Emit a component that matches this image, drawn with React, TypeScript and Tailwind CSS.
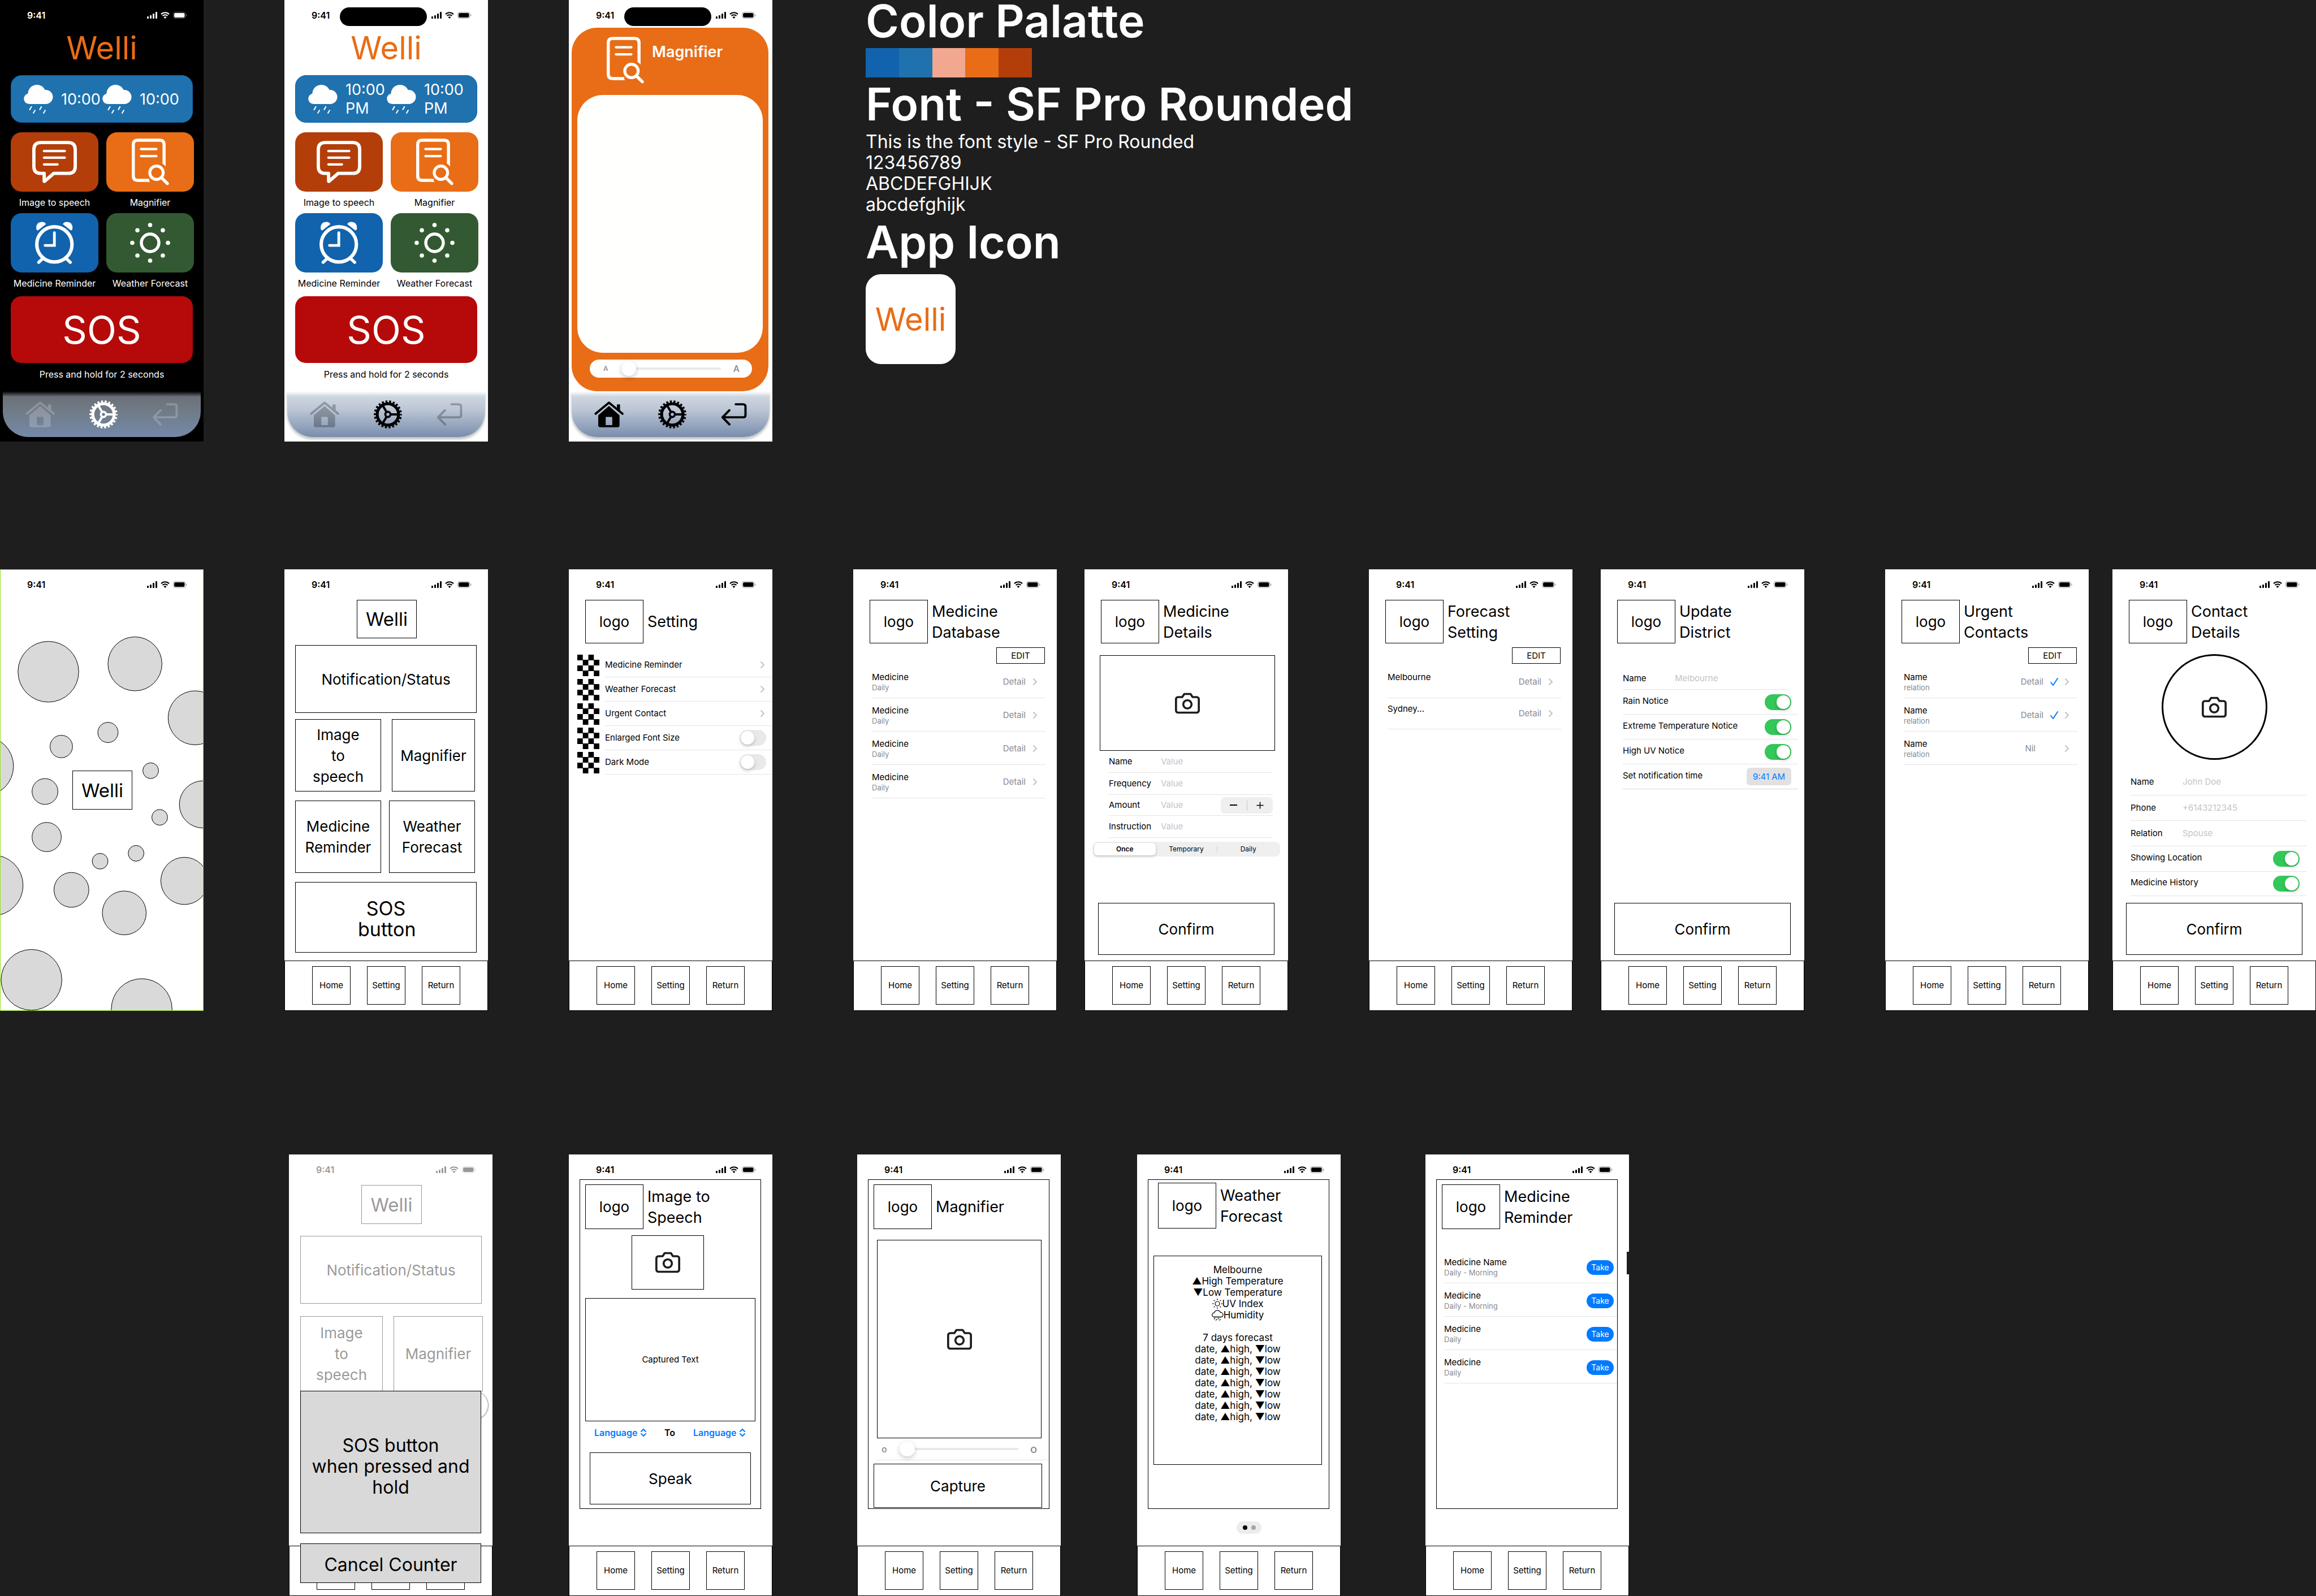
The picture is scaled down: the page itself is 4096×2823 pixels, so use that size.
import React, { ReactNode } from "react";

/* ---------- icons ---------- */

function SignalIcon() {
  return (
    <svg className="h-[12px] w-[18px]" viewBox="0 0 18 12" fill="currentColor" aria-hidden="true">
      <rect x="0" y="8" width="3" height="4" rx="1" />
      <rect x="5" y="6" width="3" height="6" rx="1" />
      <rect x="10" y="3" width="3" height="9" rx="1" />
      <rect x="15" y="0" width="3" height="12" rx="1" />
    </svg>
  );
}

function WifiIcon() {
  return (
    <svg className="h-[12px] w-[16px]" viewBox="0 0 16 12" fill="none" stroke="currentColor" strokeWidth="2" aria-hidden="true">
      <path d="M1 4.2a10 10 0 0 1 14 0" />
      <path d="M3.6 7a6.2 6.2 0 0 1 8.8 0" />
      <path d="M8 12 5.6 9.5a3.4 3.4 0 0 1 4.8 0z" fill="currentColor" stroke="none" />
    </svg>
  );
}

function BatteryIcon() {
  return (
    <svg className="h-[12px] w-[25px]" viewBox="0 0 25 12" aria-hidden="true">
      <rect x="0.5" y="0.5" width="21.5" height="11" rx="3.5" fill="none" stroke="currentColor" opacity="0.35" />
      <path d="M23.3 4v4c.8-.3 1.3-1.100 1.300-2s-.5-1.700-1.300-2z" fill="currentColor" opacity="0.4" />
      <rect x="2" y="2" width="18.500" height="8" rx="2.300" fill="currentColor" />
    </svg>
  );
}

function RainIcon() {
  return (
    <svg className="h-[51px] w-[52px] shrink-0" viewBox="93 78 170 168" fill="white" aria-hidden="true">
      <circle cx="124" cy="159" r="31" />
      <circle cx="169" cy="130" r="52" />
      <circle cx="221" cy="149" r="41" />
      <rect x="124" y="150" width="98" height="40" />
      <path d="M137 206l-10 17M158 227l-9 15M195 206l-9 16M217 227l-9 16" stroke="white" strokeWidth="7" strokeLinecap="round" />
    </svg>
  );
}

function SpeechIcon() {
  return (
    <svg className="h-[75px] w-[79px]" viewBox="147 402 258 244" fill="none" stroke="white" strokeLinecap="round" strokeLinejoin="round" aria-hidden="true">
      <path strokeWidth="19" d="M197 411.500H355Q395.500 411.500 395.500 452V550Q395.500 590 355 590H271L218 636Q216 636 216 633V590H197Q156.500 590 156.500 550V452Q156.500 411.500 197 411.500Z" />
      <path strokeWidth="14" d="M215 461H335M215 499H335M215 538H293" />
    </svg>
  );
}

function DocSearchIcon() {
  return (
    <svg className="h-[83px] w-[66px]" viewBox="723 388 217 271" fill="none" stroke="white" aria-hidden="true">
      <path strokeWidth="18" d="M825 630H758Q732 630 732 604V423Q732 397 758 397H885Q911 397 911 423V532" />
      <path d="M902 530l18 0v20q-8-11-18-17zM814 621q5 11 17 18h-20z" fill="white" stroke="none" />
      <path strokeWidth="14" strokeLinecap="round" d="M777 448H866M777 489H866" />
      <circle cx="867" cy="586" r="39" strokeWidth="17" />
      <path strokeWidth="18" strokeLinecap="round" d="M899 618l31 31" />
    </svg>
  );
}

function AlarmIcon() {
  return (
    <svg className="h-[75px] w-[69px]" viewBox="156 854 226 244" fill="none" stroke="white" strokeLinecap="round" aria-hidden="true">
      <circle cx="268" cy="985" r="102" strokeWidth="20" />
      <path strokeWidth="16" strokeLinejoin="miter" d="M268 918V991H214" />
      <path strokeWidth="18" d="M200 1068l-23 21M337 1068l23 21" />
      <path fill="white" stroke="none" d="M163 890Q163 855 195 855Q214 855 219 868L173 904Q163 904 163 890Z" />
      <path fill="white" stroke="none" d="M373 890Q373 855 341 855Q322 855 317 868L363 904Q373 904 373 890Z" />
    </svg>
  );
}

function SunIcon() {
  return (
    <svg className="h-[71px] w-[71px]" viewBox="704 881 234 234" fill="white" aria-hidden="true">
      <circle cx="821" cy="998" r="51" fill="none" stroke="white" strokeWidth="18" />
      <circle cx="821" cy="894" r="12.500" />
      <circle cx="821" cy="1102" r="12.500" />
      <circle cx="717" cy="998" r="12.500" />
      <circle cx="925" cy="998" r="12.500" />
      <circle cx="747" cy="925" r="12.500" />
      <circle cx="895" cy="925" r="12.500" />
      <circle cx="747" cy="1072" r="12.500" />
      <circle cx="895" cy="1072" r="12.500" />
    </svg>
  );
}

function HouseIcon() {
  return (
    <svg className="h-[46px] w-[52px]" viewBox="145 88 170 150" fill="currentColor" aria-hidden="true">
      <path fillRule="evenodd" d="M168 168L230 114L291 168V227Q291 237 281 237H178Q168 237 168 227ZM211 181V225H249V181Q249 178 246 178H214Q211 178 211 181Z" />
      <path d="M276 139V108Q276 105 279 105H291Q294 105 294 108V152Z" />
      <path fill="none" stroke="currentColor" strokeWidth="13" strokeLinecap="round" strokeLinejoin="round" d="M153 159L230 95L308 159" />
    </svg>
  );
}

function GearIcon() {
  return (
    <svg className="h-[50px] w-[50px]" viewBox="-82 -82 164 164" fill="none" stroke="currentColor" aria-hidden="true">
      <circle r="62" strokeWidth="17" />
      <circle r="74" strokeWidth="15" strokeDasharray="11.134 10" strokeDashoffset="5.500" />
      <circle r="15" strokeWidth="12" />
      <path strokeWidth="13" d="M18 0H58M-9 -16L-29 -50M-9 16L-29 50" />
    </svg>
  );
}

function ReturnIcon() {
  return (
    <svg className="h-[40px] w-[46px]" viewBox="884 100 149 132" fill="none" stroke="currentColor" strokeWidth="13" strokeLinecap="round" strokeLinejoin="round" aria-hidden="true">
      <path d="M969 107H1012Q1026 107 1026 121V169Q1026 183 1012 183H892M932 142L892 183L932 224" />
    </svg>
  );
}

function CameraIcon() {
  return (
    <svg className="h-[44px] w-[44px]" viewBox="0 0 24 24" fill="none" stroke="#1d1d1f" strokeWidth="2" strokeLinejoin="round" aria-hidden="true">
      <path d="M23 19a2 2 0 0 1-2 2H3a2 2 0 0 1-2-2V8a2 2 0 0 1 2-2h4l2-3h6l2 3h4a2 2 0 0 1 2 2z" />
      <circle cx="12" cy="13" r="4" />
    </svg>
  );
}

function Chevron() {
  return (
    <svg className="h-[12px] w-[7px] shrink-0" viewBox="0 0 7 12" fill="none" stroke="#c4c4c7" strokeWidth="2" strokeLinecap="round" strokeLinejoin="round" aria-hidden="true">
      <path d="M1 1l5 5-5 5" />
    </svg>
  );
}

function Check() {
  return (
    <svg className="h-[14px] w-[14px] shrink-0" viewBox="0 0 14 14" fill="none" stroke="#007aff" strokeWidth="2" strokeLinecap="round" strokeLinejoin="round" aria-hidden="true">
      <path d="M1 8l4 5L13 1" />
    </svg>
  );
}

function SmallSun() {
  return (
    <svg className="h-[18px] w-[18px]" viewBox="0 0 18 18" fill="black" aria-hidden="true">
      <circle cx="9" cy="9" r="4" fill="none" stroke="black" strokeWidth="1.200" />
      <circle cx="9" cy="1.200" r="1" />
      <circle cx="9" cy="16.800" r="1" />
      <circle cx="1.200" cy="9" r="1" />
      <circle cx="16.800" cy="9" r="1" />
      <circle cx="3.500" cy="3.500" r="1" />
      <circle cx="14.500" cy="3.500" r="1" />
      <circle cx="3.500" cy="14.500" r="1" />
      <circle cx="14.500" cy="14.500" r="1" />
    </svg>
  );
}

function SmallRain() {
  return (
    <svg className="h-[20px] w-[21px]" viewBox="0 0 21 20" fill="none" stroke="black" strokeWidth="1.300" strokeLinecap="round" aria-hidden="true">
      <path d="M4.500 13.500a3.700 3.700 0 0 1-.2-7.400 6 6 0 0 1 11.200-.6 4 4 0 0 1 .8 8z" />
      <path d="M5.500 15.500l-1 1.800M8.500 17.500l-1 1.800M12 15.500l-1 1.800M15 17.500l-1 1.800" />
    </svg>
  );
}

/* ---------- phone shell ---------- */

function StatusBar({ faded = false }: { faded?: boolean }) {
  return (
    <div className={`flex h-[44px] items-center pt-[10px] pr-[29px] pl-[48px] ${faded ? "opacity-40" : ""}`}>
      <span className="text-[16px] leading-[20px] font-semibold">9:41</span>
      <div className="ml-auto flex items-center gap-[6px]">
        <SignalIcon />
        <WifiIcon />
        <BatteryIcon />
      </div>
    </div>
  );
}

type PhoneProps = {
  place: string;
  dark?: boolean;
  faded?: boolean;
  island?: boolean;
  footer?: ReactNode;
  children?: ReactNode;
};

function Phone({ place, dark, faded, island, footer, children }: PhoneProps) {
  return (
    <section className={`relative flex min-h-[781px] min-w-0 flex-col ${dark ? "bg-black text-white" : "bg-white text-black"} ${place}`}>
      <StatusBar faded={faded} />
      {island && <div className="absolute top-[13px] left-[98px] h-[33px] w-[154px] rounded-full bg-black" />}
      <div className="flex flex-1 flex-col">{children}</div>
      {footer}
    </section>
  );
}

function WireNav({ bare }: { bare?: boolean }) {
  return (
    <nav className="flex h-[89px] gap-[29px] border border-black pt-[9px] pl-[48px]">
      {["Home", "Setting", "Return"].map((name) => (
        <button key={name} aria-label={name} className="h-[68px] w-[68px] border border-black text-[15px] leading-[18px]">
          {bare ? null : name}
        </button>
      ))}
    </nav>
  );
}

function AppNav({ dark, homeActive }: { dark?: boolean; homeActive?: boolean }) {
  const dim = dark ? "opacity-20" : "opacity-25";
  return (
    <nav
      className={`mx-[5px] mb-[8px] flex h-[81px] items-center justify-between rounded-b-[45px] px-[40px] ${
        dark
          ? "bg-[linear-gradient(#000,#6b7079_12%,#6f7983_35%,#7489a8)]"
          : "bg-[linear-gradient(#fff,#cdd5df_12%,#bcc6d5_40%,#788dac)] shadow-[0_4px_4px_rgba(0,0,0,0.25)]"
      }`}
    >
      <button aria-label="Home" className={homeActive ? "" : dim}>
        <HouseIcon />
      </button>
      <button aria-label="Settings">
        <GearIcon />
      </button>
      <button aria-label="Return" className={homeActive ? "" : dim}>
        <ReturnIcon />
      </button>
    </nav>
  );
}

/* ---------- shared parts ---------- */

function Header({ title, place = "mt-[10px] ml-[29px]", logo = "h-[77px]" }: { title: string; place?: string; logo?: string }) {
  return (
    <header className={`flex items-center gap-[7px] ${place}`}>
      <div className={`flex w-[103px] shrink-0 items-center justify-center border border-black text-[26px] leading-[37px] ${logo}`}>logo</div>
      <h2 className="text-[27px] leading-[37px] whitespace-pre-line">{title}</h2>
    </header>
  );
}

function Toggle({ id, on }: { id: string; on?: boolean }) {
  return (
    <input
      id={id}
      type="checkbox"
      defaultChecked={on}
      className="relative h-[28px] w-[47px] shrink-0 appearance-none rounded-full bg-[#e9e9ea] before:absolute before:top-[2px] before:left-[2px] before:h-[24px] before:w-[24px] before:rounded-full before:bg-white before:shadow-[0_3px_6px_rgba(0,0,0,0.2)] checked:bg-[#34c759] checked:before:left-[21px]"
    />
  );
}

function EditButton() {
  return <button className="mt-[7px] mr-[21px] h-[29px] w-[86px] self-end border border-black text-[15px] leading-[20px]">EDIT</button>;
}

type DetailRowProps = { title: string; sub?: string; detail?: string; checked?: boolean; height?: string };

function DetailRow({ title, sub, detail = "Detail", checked, height = "h-[59px] pt-[2px]" }: DetailRowProps) {
  return (
    <li className={`flex items-center border-b border-[#e4e4e6] pr-[15px] ${height}`}>
      <div className="flex h-[36px] flex-col">
        <span className="text-[15px] leading-[19px]">{title}</span>
        {sub && <span className="text-[13px] leading-[18px] text-[#8a8a8e]">{sub}</span>}
      </div>
      <a href="#detail" className="ml-auto flex items-center text-[15px] leading-[20px] text-[#8a8a8e]">
        <span className={detail === "Nil" ? "mr-[52px]" : checked ? "mr-[12px]" : "mr-[13px]"}>{detail}</span>
        {checked && (
          <span className="mr-[12px]">
            <Check />
          </span>
        )}
        <Chevron />
      </a>
    </li>
  );
}

type FieldProps = { id: string; label: string; hint: string; height: string; labelWidth: string; children?: ReactNode };

function Field({ id, label, hint, height, labelWidth, children }: FieldProps) {
  return (
    <div className={`flex items-center border-b border-[#e4e4e6] ${height}`}>
      <label htmlFor={id} className={`shrink-0 text-[15px] leading-[20px] ${labelWidth}`}>
        {label}
      </label>
      <input id={id} placeholder={hint} className="min-w-0 flex-1 bg-transparent text-[15px] leading-[20px] outline-none placeholder:text-[#c4c4c7]" />
      {children}
    </div>
  );
}

function ToggleField({ id, label, height, pad }: { id: string; label: string; height: string; pad: string }) {
  return (
    <div className={`flex items-center justify-between border-b border-[#e4e4e6] ${height} ${pad}`}>
      <label htmlFor={id} className="pb-[4px] text-[15px] leading-[20px]">
        {label}
      </label>
      <Toggle id={id} on />
    </div>
  );
}

function ConfirmButton() {
  return <button className="mx-[24px] mt-auto mb-[10px] h-[92px] border border-black text-[26px] leading-[37px]">Confirm</button>;
}

const frame = "mr-[20px] ml-[19px] flex h-[583px] flex-col border border-black";

/* ---------- screens: finished design ---------- */

function Tile({ name, color, children }: { name: string; color: string; children: ReactNode }) {
  return (
    <button className="flex flex-col items-stretch">
      <span className={`flex h-[105px] items-center justify-center rounded-[19px] ${color}`}>{children}</span>
      <span className="text-[16px] leading-[38px] whitespace-nowrap">{name}</span>
    </button>
  );
}

function HomeScreen({ place, dark, time }: { place: string; dark?: boolean; time: string }) {
  return (
    <Phone place={place} dark={dark} island={!dark} footer={<AppNav dark={dark} />}>
      <h1 className="mt-[5px] text-center text-[56px] leading-[72px] text-[#e86d16]">Welli</h1>
      <div className="mx-[19px] mt-[12px] flex h-[84px] items-center rounded-[19px] border border-[#1063ac] bg-[#1f72ae] pl-[22px] text-[27px] leading-[33px] text-white">
        {[0, 1].map((n) => (
          <div key={n} className="flex w-[139px] shrink-0 items-center gap-[14px]">
            <RainIcon />
            <span>{time}</span>
          </div>
        ))}
      </div>
      <div className="mt-[17px] mr-[17px] ml-[19px] grid grid-cols-2 gap-x-[14px]">
        <Tile name="Image to speech" color="bg-[#b43e09]">
          <SpeechIcon />
        </Tile>
        <Tile name="Magnifier" color="bg-[#e86d16]">
          <DocSearchIcon />
        </Tile>
        <Tile name="Medicine Reminder" color="bg-[#1063ac]">
          <AlarmIcon />
        </Tile>
        <Tile name="Weather Forecast" color="bg-[#335932]">
          <SunIcon />
        </Tile>
      </div>
      <button className="mx-[19px] mt-[4px] h-[118px] rounded-[19px] bg-[#b50a09] text-[68px] leading-[80px] text-white">SOS</button>
      <p className="text-center text-[16px] leading-[40px]">Press and hold for 2 seconds</p>
    </Phone>
  );
}

function MagnifierScreen({ place }: { place: string }) {
  return (
    <Phone place={place} island footer={<AppNav homeActive />}>
      <div className="mt-[5px] mr-[7px] ml-[5px] flex h-[643px] flex-col rounded-[45px] bg-[#e86d16]">
        <div className="flex h-[119px] gap-[14px] pt-[16px] pl-[62px] text-white">
          <DocSearchIcon />
          <h2 className="pt-[8px] text-[27px] leading-[38px] font-semibold">Magnifier</h2>
        </div>
        <div className="mx-[10px] h-[456px] rounded-[45px] bg-[#fffffd]" />
        <div className="mt-[12px] mr-[29px] ml-[32px] flex h-[32px] items-center rounded-[16px] bg-white pr-[22px] pl-[24px] font-medium text-[#8a8a8e]">
          <span className="text-[12px] leading-[16px]">A</span>
          <input
            type="range"
            aria-label="Zoom"
            defaultValue={0}
            className="mr-[22px] ml-[23px] h-[4px] min-w-0 flex-1 appearance-none rounded-full bg-[#e9e9ea] [&::-webkit-slider-thumb]:h-[26px] [&::-webkit-slider-thumb]:w-[26px] [&::-webkit-slider-thumb]:appearance-none [&::-webkit-slider-thumb]:rounded-full [&::-webkit-slider-thumb]:bg-white [&::-webkit-slider-thumb]:shadow-[0_3px_8px_rgba(0,0,0,0.22)]"
          />
          <span className="text-[16px] leading-[20px]">A</span>
        </div>
      </div>
    </Phone>
  );
}

function StyleGuide({ place }: { place: string }) {
  const title = "text-[80px] leading-[74px] font-semibold";
  return (
    <section className={`text-white ${place}`}>
      <h1 className={title}>Color Palatte</h1>
      <div className="mt-[11px] flex h-[52px] w-[294px]">
        <div className="flex-1 bg-[#1063ac]" />
        <div className="flex-1 bg-[#1f72ae]" />
        <div className="flex-1 bg-[#f2a890]" />
        <div className="flex-1 bg-[#e86d16]" />
        <div className="flex-1 bg-[#b43e09]" />
      </div>
      <h1 className={`mt-[10px] ${title}`}>Font - SF Pro Rounded</h1>
      <p className="mt-[11px] text-[32px] leading-[37px]">
        This is the font style - SF Pro Rounded
        <br />
        123456789
        <br />
        ABCDEFGHIJK
        <br />
        abcdefghijk
      </p>
      <h1 className={`mt-[11px] ${title}`}>App Icon</h1>
      <div className="mt-[20px] flex h-[159px] w-[159px] items-center justify-center rounded-[27px] bg-white text-[56px] leading-[72px] text-[#e86d16]">Welli</div>
    </section>
  );
}

/* ---------- screens: wireframes ---------- */

const bubbles = [
  [85, 180, 54],
  [239, 166, 48],
  [346, 262, 48],
  [191, 288, 18],
  [108, 313, 20],
  [-30, 348, 53],
  [267, 356, 14],
  [79, 393, 23],
  [360, 416, 42],
  [283, 439, 14],
  [82, 474, 26],
  [241, 503, 14],
  [177, 517, 14],
  [-14, 560, 54],
  [126, 568, 31],
  [327, 552, 42],
  [220, 609, 39],
  [55, 728, 54],
  [251, 780, 54],
];

function Splash({ place }: { place: string }) {
  return (
    <Phone place={`${place} ring-1 ring-inset ring-[#94e01b]`}>
      <svg className="absolute inset-0 h-full w-full p-px" viewBox="0 0 360 781" fill="#d9d9d9" stroke="black" aria-hidden="true">
        {bubbles.map(([x, y, r]) => (
          <circle key={`${x}-${y}`} cx={x} cy={y} r={r} />
        ))}
      </svg>
      <div className="relative mt-[312px] ml-[128px] flex h-[69px] w-[106px] items-center justify-center border border-black bg-white text-[33px] leading-[40px]">Welli</div>
    </Phone>
  );
}

const wireButton = "border border-black text-[26px] leading-[37px]";

function WireHome({ place }: { place: string }) {
  return (
    <Phone place={place} footer={<WireNav />}>
      <div className="mt-[10px] ml-[128px] flex h-[68px] w-[106px] items-center justify-center border border-black text-[33px] leading-[40px]">Welli</div>
      <div className={`mt-[12px] mr-[20px] ml-[19px] flex h-[120px] items-center justify-center ${wireButton}`}>Notification/Status</div>
      <div className="mt-[11px] mr-[23px] ml-[19px] grid grid-cols-[152fr_147fr] gap-[19px]">
        <button className={`h-[128px] px-[24px] ${wireButton}`}>Image to speech</button>
        <button className={`h-[128px] ${wireButton}`}>Magnifier</button>
      </div>
      <div className="mt-[16px] mr-[23px] ml-[19px] grid grid-cols-2 gap-[14px]">
        <button className={`h-[128px] ${wireButton}`}>Medicine Reminder</button>
        <button className={`h-[128px] ${wireButton}`}>Weather Forecast</button>
      </div>
      <button className="mt-[16px] mr-[20px] ml-[19px] h-[125px] border border-black px-[110px] pt-[4px] text-[34px] leading-[37px]">SOS button</button>
    </Phone>
  );
}

const checkers = "mb-[2px] h-[38px] w-[39px] bg-[repeating-conic-gradient(#fff_0_25%,#000_0_50%)] bg-size-[50%_50%]";

function WireSettings({ place }: { place: string }) {
  return (
    <Phone place={place} footer={<WireNav />}>
      <Header title="Setting" />
      <ul className="mt-[17px]">
        {["Medicine Reminder", "Weather Forecast", "Urgent Contact"].map((name) => (
          <li key={name} className="flex h-[43px] items-end pl-[15px]">
            <span className={checkers} />
            <a href="#open" className="ml-[10px] flex h-[43px] flex-1 items-center justify-between border-b border-[#e4e4e6] pr-[14px] text-[15px] leading-[20px]">
              {name}
              <Chevron />
            </a>
          </li>
        ))}
        {["Enlarged Font Size", "Dark Mode"].map((name) => (
          <li key={name} className="flex h-[43px] items-end pl-[15px]">
            <span className={checkers} />
            <label className="ml-[10px] flex h-[43px] flex-1 items-center justify-between border-b border-[#e4e4e6] pr-[11px] text-[15px] leading-[20px]">
              {name}
              <Toggle id={name} />
            </label>
          </li>
        ))}
      </ul>
    </Phone>
  );
}

function MedicineDatabase({ place }: { place: string }) {
  return (
    <Phone place={place} footer={<WireNav />}>
      <Header title={"Medicine\nDatabase"} />
      <EditButton />
      <ul className="mt-[2px] mr-[20px] ml-[33px]">
        {[0, 1, 2, 3].map((n) => (
          <DetailRow key={n} title="Medicine" sub="Daily" />
        ))}
      </ul>
    </Phone>
  );
}

function MedicineDetails({ place }: { place: string }) {
  return (
    <Phone place={place} footer={<WireNav />}>
      <Header title={"Medicine\nDetails"} />
      <button aria-label="Add photo" className="mt-[21px] mr-[23px] ml-[27px] flex h-[169px] items-center justify-center border border-black">
        <CameraIcon />
      </button>
      <div className="mr-[27px] ml-[43px]">
        <Field id="med-name" label="Name" hint="Value" height="h-[39px]" labelWidth="w-[92px]" />
        <Field id="med-frequency" label="Frequency" hint="Value" height="h-[39px]" labelWidth="w-[92px]" />
        <Field id="med-amount" label="Amount" hint="Value" height="h-[37px]" labelWidth="w-[92px]">
          <div className="flex h-[29px] w-[92px] items-center rounded-[7px] bg-[#efeff0]">
            <button aria-label="Less" className="flex h-full flex-1 items-center justify-center">
              <span className="h-[2px] w-[13px] bg-black" />
            </button>
            <span className="h-[17px] w-px bg-[#c4c4c7]" />
            <button aria-label="More" className="flex h-full flex-1 items-center justify-center">
              <svg className="h-[13px] w-[13px]" viewBox="0 0 13 13" stroke="black" strokeWidth="1.500" strokeLinecap="round" aria-hidden="true">
                <path d="M6.500 1v11M1 6.500h11" />
              </svg>
            </button>
          </div>
        </Field>
        <Field id="med-instruction" label="Instruction" hint="Value" height="h-[39px]" labelWidth="w-[92px]" />
      </div>
      <div className="mt-[7px] mr-[14px] ml-[15px] flex h-[26px] items-center rounded-[8px] bg-[#efeff0] p-[2px] text-[12px] leading-[16px]">
        <button className="h-full flex-1 rounded-[6px] bg-white font-semibold shadow-[0_2px_5px_rgba(0,0,0,0.2)]">Once</button>
        <button className="h-full flex-1">Temporary</button>
        <span className="h-[11px] w-px bg-[#d0d0d4]" />
        <button className="h-full flex-1">Daily</button>
      </div>
      <ConfirmButton />
    </Phone>
  );
}

function ForecastSetting({ place }: { place: string }) {
  return (
    <Phone place={place} footer={<WireNav />}>
      <Header title={"Forecast\nSetting"} />
      <EditButton />
      <ul className="mt-[2px] mr-[20px] ml-[33px]">
        <DetailRow title="Melbourne" />
        <DetailRow title="Sydney..." height="h-[55px]" />
      </ul>
    </Phone>
  );
}

function UpdateDistrict({ place }: { place: string }) {
  return (
    <Phone place={place} footer={<WireNav />}>
      <Header title={"Update\nDistrict"} />
      <div className="mt-[43px] mr-[29px] ml-[39px]">
        <Field id="district" label="Name" hint="Melbourne" height="h-[39px]" labelWidth="w-[92px]" />
      </div>
      <div className="mr-[11px] ml-[39px]">
        <ToggleField id="rain" label="Rain Notice" height="h-[44px]" pad="pr-[12px]" />
        <ToggleField id="extreme" label="Extreme Temperature Notice" height="h-[44px]" pad="pr-[12px]" />
        <ToggleField id="uv" label="High UV Notice" height="h-[44px]" pad="pr-[12px]" />
        <div className="flex h-[44px] items-center justify-between border-b border-[#d8d8da] pr-[12px]">
          <span id="notify" className="pb-[3px] text-[15px] leading-[20px]">
            Set notification time
          </span>
          <button aria-labelledby="notify" className="h-[31px] w-[79px] rounded-[6px] bg-[#e1e1e4] text-[15px] leading-[20px] text-[#007aff]">
            9:41 AM
          </button>
        </div>
      </div>
      <ConfirmButton />
    </Phone>
  );
}

function UrgentContacts({ place }: { place: string }) {
  return (
    <Phone place={place} footer={<WireNav />}>
      <Header title={"Urgent\nContacts"} />
      <EditButton />
      <ul className="mt-[2px] mr-[20px] ml-[33px]">
        <DetailRow title="Name" sub="relation" checked />
        <DetailRow title="Name" sub="relation" checked />
        <DetailRow title="Name" sub="relation" detail="Nil" />
      </ul>
    </Phone>
  );
}

function ContactDetails({ place }: { place: string }) {
  return (
    <Phone place={place} footer={<WireNav />}>
      <Header title={"Contact\nDetails"} />
      <button aria-label="Add photo" className="mt-[19px] flex h-[187px] w-[187px] items-center justify-center self-center rounded-full border-[3px] border-black">
        <CameraIcon />
      </button>
      <div className="mt-[16px] mr-[17px] ml-[32px]">
        <Field id="c-name" label="Name" hint="John Doe" height="h-[47px]" labelWidth="w-[92px]" />
        <Field id="c-phone" label="Phone" hint="+6143212345" height="h-[45px]" labelWidth="w-[92px]" />
        <Field id="c-relation" label="Relation" hint="Spouse" height="h-[45px]" labelWidth="w-[92px]" />
        <ToggleField id="location" label="Showing Location" height="h-[45px]" pad="pr-[12px]" />
        <ToggleField id="history" label="Medicine History" height="h-[43px]" pad="pr-[12px]" />
      </div>
      <ConfirmButton />
    </Phone>
  );
}

function SosPressed({ place }: { place: string }) {
  return (
    <Phone place={place} faded footer={<WireNav bare />}>
      <div className="opacity-40">
        <div className="mt-[10px] ml-[128px] flex h-[69px] w-[107px] items-center justify-center border border-black text-[33px] leading-[40px]">Welli</div>
        <div className={`mt-[21px] mr-[19px] ml-[20px] flex h-[120px] items-center justify-center ${wireButton}`}>Notification/Status</div>
        <div className="mt-[22px] mr-[17px] ml-[20px] grid grid-cols-[146fr_158fr] gap-[19px]">
          <button className={`h-[133px] px-[24px] ${wireButton}`}>Image to speech</button>
          <button className={`h-[133px] ${wireButton}`}>Magnifier</button>
        </div>
      </div>
      <div className="absolute top-[418px] left-[302px] h-[51px] w-[51px] rounded-full border border-[#8f8f8f] bg-white shadow-[0_2px_3px_rgba(0,0,0,0.15)]" />
      <div className="absolute inset-x-[20px] top-[418px] flex flex-col gap-[18px] text-[32px] leading-[37px]">
        <button className="h-[252px] border border-black bg-[#d9d9d9] px-[12px] pt-[14px]">
          SOS button
          <br />
          when pressed and
          <br />
          hold
        </button>
        <button className="h-[70px] border border-black bg-[#d9d9d9] pt-[4px]">Cancel Counter</button>
      </div>
    </Phone>
  );
}

function LanguageSelect({ label }: { label: string }) {
  return (
    <div className="flex items-center gap-[5px]">
      <select aria-label={label} className="appearance-none bg-transparent text-[16px] leading-[20px] font-semibold text-[#007aff]">
        <option>Language</option>
      </select>
      <svg className="h-[14px] w-[10px]" viewBox="0 0 10 14" fill="none" stroke="#007aff" strokeWidth="2" strokeLinecap="round" strokeLinejoin="round" aria-hidden="true">
        <path d="M1 5l4-4 4 4M1 9l4 4 4-4" />
      </svg>
    </div>
  );
}

function ImageToSpeech({ place }: { place: string }) {
  return (
    <Phone place={place} footer={<WireNav />}>
      <div className={frame}>
        <Header title={"Image to\nSpeech"} place="mt-[8px] ml-[9px]" logo="h-[79px]" />
        <button aria-label="Take photo" className="mt-[11px] ml-[91px] flex h-[96px] w-[128px] items-center justify-center border border-black">
          <CameraIcon />
        </button>
        <div className="mt-[15px] mr-[9px] ml-[9px] flex h-[218px] items-center justify-center border border-black text-[15px] leading-[20px]">Captured Text</div>
        <div className="flex h-[40px] items-center gap-[32px] pl-[25px]">
          <LanguageSelect label="From language" />
          <span className="text-[16px] leading-[20px] font-semibold">To</span>
          <LanguageSelect label="To language" />
        </div>
        <button className="mx-[17px] mt-[15px] h-[92px] border border-black text-[26px] leading-[37px]">Speak</button>
      </div>
    </Phone>
  );
}

function WireMagnifier({ place }: { place: string }) {
  return (
    <Phone place={place} footer={<WireNav />}>
      <div className={frame}>
        <Header title="Magnifier" place="mt-[8px] ml-[9px]" logo="h-[79px]" />
        <div className="mt-[19px] mr-[13px] ml-[15px] flex h-[351px] items-center justify-center border border-black">
          <CameraIcon />
        </div>
        <div className="ml-[15px] flex h-[39px] items-center border-b border-[#e4e4e6] pr-[21px] pl-[8px] font-medium text-[#8a8a8e]">
          <span className="w-[32px] text-[16px] leading-[18px]">o</span>
          <input
            type="range"
            aria-label="Zoom"
            defaultValue={0}
            className="mr-[21px] h-[4px] min-w-0 flex-1 appearance-none rounded-full bg-[#e9e9ea] [&::-webkit-slider-thumb]:h-[26px] [&::-webkit-slider-thumb]:w-[27px] [&::-webkit-slider-thumb]:appearance-none [&::-webkit-slider-thumb]:rounded-full [&::-webkit-slider-thumb]:bg-white [&::-webkit-slider-thumb]:shadow-[0_3px_8px_rgba(0,0,0,0.22)]"
          />
          <span className="text-[20px] leading-[20px]">o</span>
        </div>
        <button className="mt-[6px] mr-[12px] ml-[9px] h-[78px] border border-black text-[26px] leading-[37px]">Capture</button>
      </div>
    </Phone>
  );
}

function WeatherForecast({ place }: { place: string }) {
  return (
    <Phone place={place} footer={<WireNav />}>
      <div className={frame}>
        <Header title={"Weather\nForecast"} place="mt-[5px] ml-[17px]" logo="h-[81px]" />
        <div className="mt-[48px] mr-[12px] ml-[9px] h-[370px] border border-black pt-[14px] text-center text-[17px] leading-[20px]">
          <p>Melbourne</p>
          <p>▲High Temperature</p>
          <p>▼Low Temperature</p>
          <p className="flex items-center justify-center">
            <SmallSun />
            UV Index
          </p>
          <p className="flex items-center justify-center">
            <SmallRain />
            Humidity
          </p>
          <p className="pt-[20px]">7 days forecast</p>
          {[1, 2, 3, 4, 5, 6, 7].map((day) => (
            <p key={day}>date, ▲high, ▼low</p>
          ))}
        </div>
      </div>
      <div className="mt-[22px] ml-[176px] flex h-[22px] w-[44px] items-center justify-center gap-[7px] rounded-full bg-[#ececed]">
        <button aria-label="Page 1" className="h-[8px] w-[8px] rounded-full bg-black" />
        <button aria-label="Page 2" className="h-[8px] w-[8px] rounded-full bg-[#a5a5a7]" />
      </div>
    </Phone>
  );
}

function MedicineReminder({ place }: { place: string }) {
  const doses = [
    ["Medicine Name", "Daily - Morning"],
    ["Medicine", "Daily - Morning"],
    ["Medicine", "Daily"],
    ["Medicine", "Daily"],
  ];
  return (
    <Phone place={place} footer={<WireNav />}>
      <div className={frame}>
        <Header title={"Medicine\nReminder"} place="mt-[8px] ml-[9px]" logo="h-[79px]" />
        <ul className="mt-[37px] ml-[13px]">
          {doses.map(([name, when], i) => (
            <li key={i} className="flex h-[59px] items-center justify-between border-b border-[#e4e4e6] pt-[3px] pr-[6px]">
              <div className="flex flex-col">
                <span className="text-[15px] leading-[19px]">{name}</span>
                <span className="text-[13px] leading-[18px] text-[#8a8a8e]">{when}</span>
              </div>
              <button className="h-[26px] w-[48px] rounded-full bg-[#007aff] text-[14px] leading-[18px] text-white">Take</button>
            </li>
          ))}
        </ul>
      </div>
      <div className="absolute top-[172px] right-0 h-[40px] w-[4px] bg-[#1e1e1e]" />
    </Phone>
  );
}

/* ---------- board ---------- */

export default function App() {
  return (
    <main className="min-h-screen overflow-hidden bg-[#1e1e1e] font-['Inter',sans-serif]">
      <div className="grid grid-cols-[360fr_143fr_360fr_143fr_360fr_165fr_2565fr]">
        <HomeScreen place="col-start-1" dark time="10:00" />
        <HomeScreen place="col-start-3" time="10:00 PM" />
        <MagnifierScreen place="col-start-5" />
        <StyleGuide place="col-start-7" />
      </div>
      <div className="mt-[226px] grid grid-cols-[360fr_143fr_360fr_143fr_360fr_143fr_360fr_49fr_360fr_143fr_360fr_50fr_360fr_143fr_360fr_42fr_360fr]">
        <Splash place="col-start-1" />
        <WireHome place="col-start-3" />
        <WireSettings place="col-start-5" />
        <MedicineDatabase place="col-start-7" />
        <MedicineDetails place="col-start-9" />
        <ForecastSetting place="col-start-11" />
        <UpdateDistrict place="col-start-13" />
        <UrgentContacts place="col-start-15" />
        <ContactDetails place="col-start-17" />
      </div>
      <div className="mt-[254px] grid grid-cols-[511fr_360fr_135fr_360fr_150fr_360fr_135fr_360fr_150fr_360fr_1215fr]">
        <SosPressed place="col-start-2" />
        <ImageToSpeech place="col-start-4" />
        <WireMagnifier place="col-start-6" />
        <WeatherForecast place="col-start-8" />
        <MedicineReminder place="col-start-10" />
      </div>
    </main>
  );
}
